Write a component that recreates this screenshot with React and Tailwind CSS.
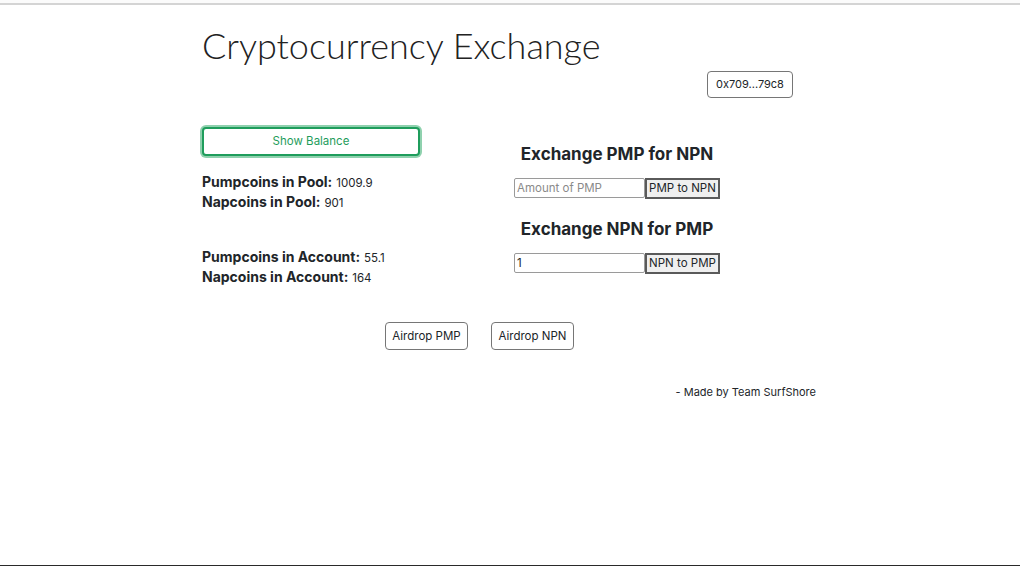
import { useState } from 'react';

export default function App() {
  const [npnAmount, setNpnAmount] = useState('1');

  return (
    <div className="min-h-[566px] bg-white flex flex-col font-['Inter','Liberation_Sans',sans-serif] text-[#212529]">
      <div className="h-[3px] bg-[#fbfbfb]" />
      <div className="h-[2px] bg-[#d4d4d4]" />
      <div className="flex-1">
        <div className="mx-auto w-[616px] pt-[18px]">
          <h1 className="font-['Lato','Noto_Sans',sans-serif] font-light text-[36px] leading-[44px] text-[#222]">
            Cryptocurrency Exchange
          </h1>

          <div className="flex justify-end pr-[25px] mt-[4px]">
            <button className="w-[86px] h-[27px] border border-[#767676] rounded-[4px] text-[11px] bg-white">
              0x709...79c8
            </button>
          </div>

          <div className="flex mt-[29px]">
            <div className="w-[218px]">
              <button className="w-full h-[29px] rounded-[4px] border-2 border-[#1f9d5c] ring-2 ring-[#8fd1ae] text-[#1f9d5c] text-[11.5px] bg-white">
                Show Balance
              </button>
              <div className="mt-[16px] text-[14px] leading-[20px]">
                <p className="h-[20px]"><span className="font-bold">Pumpcoins in Pool:</span> <span className="text-[11.5px] leading-[20px]">1009.9</span></p>
                <p className="h-[20px]"><span className="font-bold">Napcoins in Pool:</span> <span className="text-[11.5px] leading-[20px]">901</span></p>
              </div>
              <div className="mt-[35px] text-[14px] leading-[20px]">
                <p className="h-[20px]"><span className="font-bold">Pumpcoins in Account:</span> <span className="text-[11.5px] leading-[20px]">55.1</span></p>
                <p className="h-[20px]"><span className="font-bold">Napcoins in Account:</span> <span className="text-[11.5px] leading-[20px]">164</span></p>
              </div>
            </div>

            <div className="ml-[94px] w-[206px] pt-[15px]">
              <h2 className="text-center font-bold text-[17px] leading-[24px]">Exchange PMP for NPN</h2>
              <div className="flex mt-[12px]">
                <input
                  placeholder="Amount of PMP"
                  className="w-[131px] h-[20px] px-[2px] border border-[#9a9a9a] rounded-[2px] text-[11.5px] placeholder:text-[#8a8a8a] outline-none"
                />
                <button className="flex-1 h-[21px] border-2 border-[#5a5a5a] bg-[#efefef] text-[11.5px]">PMP to NPN</button>
              </div>
              <h2 className="text-center font-bold text-[17px] leading-[24px] mt-[18px]">Exchange NPN for PMP</h2>
              <div className="flex mt-[12px]">
                <input
                  value={npnAmount}
                  onChange={e => setNpnAmount(e.target.value)}
                  className="w-[131px] h-[20px] px-[2px] border border-[#9a9a9a] rounded-[2px] text-[11.5px] outline-none"
                />
                <button className="flex-1 h-[21px] border-2 border-[#5a5a5a] bg-[#efefef] text-[11.5px]">NPN to PMP</button>
              </div>
            </div>
          </div>

          <div className="flex justify-center gap-[23px] mt-[35px] pr-[61px]">
            <button className="w-[83px] h-[28px] border border-[#767676] rounded-[4px] text-[11.5px] bg-white">Airdrop PMP</button>
            <button className="w-[83px] h-[28px] border border-[#767676] rounded-[4px] text-[11.5px] bg-white">Airdrop NPN</button>
          </div>

          <p className="text-right pr-[2px] mt-[34px] text-[11px] leading-[16px]">- Made by Team SurfShore</p>
        </div>
      </div>
      <div className="h-[1px] bg-[#2a2a2a]" />
    </div>
  );
}
